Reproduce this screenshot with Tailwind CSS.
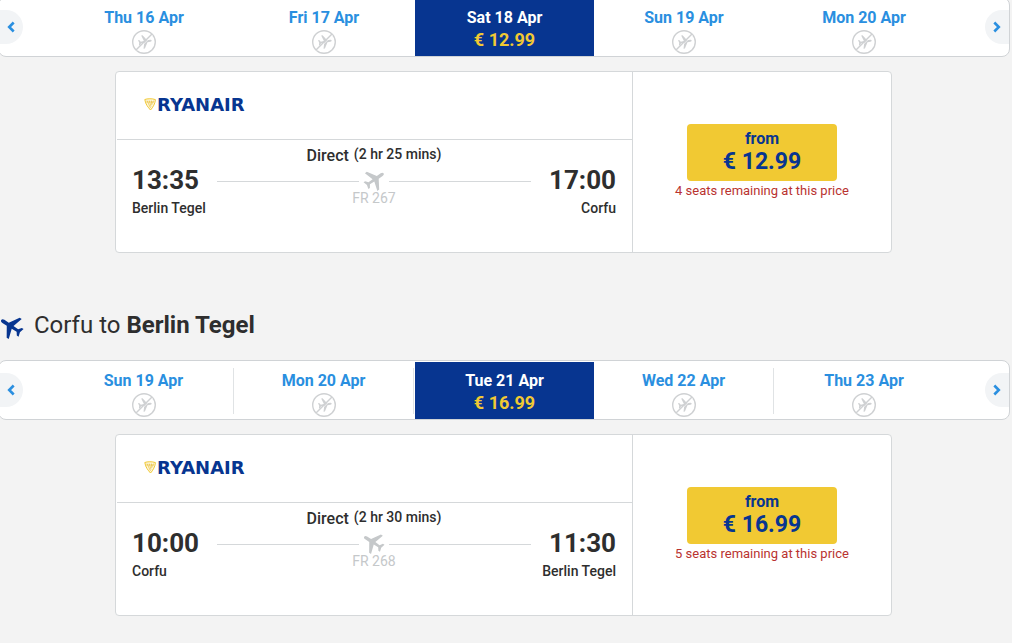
<!DOCTYPE html>
<html lang="en">
<head>
  <meta charset="UTF-8" />
  <meta name="viewport" content="width=device-width, initial-scale=1.0" />
  <title>Ryanair - Select Flights</title>
  <script src="https://cdn.jsdelivr.net/npm/@tailwindcss/browser@4"></script>
</head>
<body class="min-h-screen overflow-x-hidden bg-[#f3f3f3] font-['Roboto',sans-serif] text-[#2e2e2e]">

  <!-- Shared icons -->
  <svg class="hidden" aria-hidden="true">
    <symbol id="plane" viewBox="0 0 24 24" overflow="visible">
      <path fill="currentColor" d="M12 -2C13.300 -2 14 -.8 14 .8V6.500L25 13.500V16.200L13.800 12.800L13.500 19L17 21.500V23.800L12 22.300L7 23.800V21.500L10.500 19L10.200 12.800L-1 16.200V13.500L10 6.500V.8C10 -.8 10.700 -2 12 -2z" />
    </symbol>
    <symbol id="no-flight" viewBox="0 0 24 24">
      <circle cx="12" cy="12" r="11.300" fill="none" stroke="currentColor" stroke-width="1.400" />
      <path fill="currentColor" transform="translate(12.500 11.800) rotate(80) scale(.52) translate(-12 -12)" d="M12 -2C13.300 -2 14 -.8 14 .8V6.500L25 13.500V16.200L13.800 12.800L13.500 19L17 21.500V23.800L12 22.300L7 23.800V21.500L10.500 19L10.200 12.800L-1 16.200V13.500L10 6.500V.8C10 -.8 10.700 -2 12 -2z" />
      <path d="M5 20.600L20.600 5" stroke="#fff" stroke-width=".7" />
      <path d="M4 20L20 4" stroke="currentColor" stroke-width="1.400" />
    </symbol>
    <symbol id="chevron-left" viewBox="0 0 8 12">
      <path d="M6.700 1.500L2.200 6l4.500 4.500" fill="none" stroke="currentColor" stroke-width="2.600" />
    </symbol>
    <symbol id="chevron-right" viewBox="0 0 8 12">
      <path d="M1.300 1.500L5.800 6l-4.500 4.500" fill="none" stroke="currentColor" stroke-width="2.600" />
    </symbol>
    <symbol id="harp" viewBox="0 0 12 13">
      <path d="M.8 1.500C3 .6 8.500 .4 11.400 1.600C11.300 5 9 9.500 6.500 12C4 9 1.500 6.500 .8 1.500z" fill="#fdf6dc" stroke="#f1c933" stroke-width="1" />
      <path d="M3 2.500L6.500 10M5.200 2.500L7 8.500M7.400 2.500L7.800 7M9.500 2.600L8.500 5.500M1.800 4L9.800 4" fill="none" stroke="#e8b92a" stroke-width=".6" />
    </symbol>
  </svg>

  <main>
    <!-- Outbound flight -->
    <section>
      <div class="-mt-[3px] -ml-0.5 mr-0.5 flex h-[60px] items-center justify-between overflow-hidden rounded-lg border border-[#d0d3d6] bg-white">
        <button aria-label="Previous days" class="flex h-[34px] w-6 items-center justify-center rounded-r-full bg-[#f2f4f6] text-[#2a8fe0]">
          <svg class="h-3 w-2"><use href="#chevron-left" /></svg>
        </button>
        <ul class="grid h-full w-full max-w-[900px] grid-cols-5 pt-px text-center text-base font-bold text-[#2a8fe0]">
          <li>
            <button class="flex h-full w-full flex-col items-center pt-[9px] leading-5">Thu 16 Apr
              <svg class="mt-0.5 h-6 w-6 shrink-0 text-[#cfd1d3]"><use href="#no-flight" /></svg>
            </button>
          </li>
          <li>
            <button class="flex h-full w-full flex-col items-center pt-[9px] leading-5">Fri 17 Apr
              <svg class="mt-0.5 h-6 w-6 shrink-0 text-[#cfd1d3]"><use href="#no-flight" /></svg>
            </button>
          </li>
          <li class="pl-px">
            <button class="flex h-full w-full flex-col items-center bg-[#073590] pt-[9px] leading-5 text-white">Sat 18 Apr
              <span class="text-lg leading-6 text-[#f1c933]">€ 12.99</span>
            </button>
          </li>
          <li>
            <button class="flex h-full w-full flex-col items-center pt-[9px] leading-5">Sun 19 Apr
              <svg class="mt-0.5 h-6 w-6 shrink-0 text-[#cfd1d3]"><use href="#no-flight" /></svg>
            </button>
          </li>
          <li>
            <button class="flex h-full w-full flex-col items-center pt-[9px] leading-5">Mon 20 Apr
              <svg class="mt-0.5 h-6 w-6 shrink-0 text-[#cfd1d3]"><use href="#no-flight" /></svg>
            </button>
          </li>
        </ul>
        <button aria-label="Next days" class="flex h-[34px] w-6 items-center justify-center rounded-l-full bg-[#f2f4f6] text-[#2a8fe0]">
          <svg class="h-3 w-2"><use href="#chevron-right" /></svg>
        </button>
      </div>

      <div class="pt-3.5 pr-[5px]">
        <article class="mx-auto flex min-h-[182px] w-full max-w-[777px] rounded border border-[#d5d8da] bg-white">
          <div class="flex-1 border-r border-[#d5d8da]">
            <div class="ml-px flex h-[68px] items-center gap-px border-b border-[#d5d8da] pb-0.5 pl-[27px]">
              <svg class="h-[13px] w-3"><use href="#harp" /></svg>
              <span class="font-['DejaVu_Sans',sans-serif] text-lg leading-6 font-bold text-[#073590]">RYANAIR</span>
            </div>
            <div class="px-4 pt-1.5">
              <p class="flex items-start justify-center gap-[5px] text-base leading-5 font-medium">Direct <span class="text-sm leading-4">(2 hr 25 mins)</span></p>
              <div class="flex">
                <div class="w-[85px]">
                  <p class="text-[26px] leading-7 font-bold">13:35</p>
                  <p class="text-sm leading-7 font-medium">Berlin Tegel</p>
                </div>
                <div class="flex-1 pt-1 text-center text-sm leading-3 text-[#c5c8ca]">
                  <div class="flex items-center gap-[5px]">
                    <span class="h-px flex-1 bg-[#d5d8da]"></span>
                    <svg class="mb-0.5 h-5 w-5 rotate-55 overflow-visible"><use href="#plane" /></svg>
                    <span class="h-px flex-1 bg-[#d5d8da]"></span>
                  </div>
                  FR 267
                </div>
                <div class="w-[85px] text-right">
                  <p class="text-[26px] leading-7 font-bold">17:00</p>
                  <p class="text-sm leading-7 font-medium">Corfu</p>
                </div>
              </div>
            </div>
          </div>
          <div class="flex w-[258px] flex-col items-center justify-center">
            <button class="flex h-[57px] w-[150px] flex-col items-center rounded bg-[#f1c933] pt-[5px] text-base leading-5 font-bold text-[#073590]">from
              <span class="text-[23px] leading-[26px]">€ 12.99</span>
            </button>
            <p class="text-[13px] leading-5 text-[#b93330]">4 seats remaining at this price</p>
          </div>
        </article>
      </div>
    </section>

    <!-- Return flight -->
    <section class="pt-14">
      <h2 class="flex items-center gap-[11px] pb-[19px] text-2xl leading-8">
        <svg class="mt-1 ml-px h-[22px] w-[22px] -rotate-57 overflow-visible text-[#073590]"><use href="#plane" /></svg>
        <span>Corfu to <strong class="font-bold">Berlin Tegel</strong></span>
      </h2>

      <div class="-ml-0.5 mr-0.5 flex h-[60px] items-center justify-between overflow-hidden rounded-lg border border-[#d0d3d6] bg-white">
        <button aria-label="Previous days" class="flex h-[34px] w-6 items-center justify-center rounded-r-full bg-[#f2f4f6] text-[#2a8fe0]">
          <svg class="h-3 w-2"><use href="#chevron-left" /></svg>
        </button>
        <ul class="grid h-full w-full max-w-[900px] grid-cols-5 pt-px text-center text-base font-bold text-[#2a8fe0]">
          <li class="flex items-center">
            <button class="flex h-full flex-1 flex-col items-center pt-[9px] leading-5">Sun 19 Apr
              <svg class="mt-0.5 h-6 w-6 shrink-0 text-[#cfd1d3]"><use href="#no-flight" /></svg>
            </button>
            <span class="h-[46px] w-px bg-[#e0e3e5]"></span>
          </li>
          <li class="flex items-center">
            <button class="flex h-full flex-1 flex-col items-center pt-[9px] leading-5">Mon 20 Apr
              <svg class="mt-0.5 h-6 w-6 shrink-0 text-[#cfd1d3]"><use href="#no-flight" /></svg>
            </button>
            <span class="h-[46px] w-px bg-[#e0e3e5]"></span>
          </li>
          <li class="pl-px">
            <button class="flex h-full w-full flex-col items-center bg-[#073590] pt-[9px] leading-5 text-white">Tue 21 Apr
              <span class="text-lg leading-6 text-[#f1c933]">€ 16.99</span>
            </button>
          </li>
          <li class="flex items-center">
            <button class="flex h-full flex-1 flex-col items-center pt-[9px] leading-5">Wed 22 Apr
              <svg class="mt-0.5 h-6 w-6 shrink-0 text-[#cfd1d3]"><use href="#no-flight" /></svg>
            </button>
            <span class="h-[46px] w-px bg-[#e0e3e5]"></span>
          </li>
          <li>
            <button class="flex h-full w-full flex-col items-center pt-[9px] leading-5">Thu 23 Apr
              <svg class="mt-0.5 h-6 w-6 shrink-0 text-[#cfd1d3]"><use href="#no-flight" /></svg>
            </button>
          </li>
        </ul>
        <button aria-label="Next days" class="flex h-[34px] w-6 items-center justify-center rounded-l-full bg-[#f2f4f6] text-[#2a8fe0]">
          <svg class="h-3 w-2"><use href="#chevron-right" /></svg>
        </button>
      </div>

      <div class="pt-3.5 pr-[5px]">
        <article class="mx-auto flex min-h-[182px] w-full max-w-[777px] rounded border border-[#d5d8da] bg-white">
          <div class="flex-1 border-r border-[#d5d8da]">
            <div class="ml-px flex h-[68px] items-center gap-px border-b border-[#d5d8da] pb-0.5 pl-[27px]">
              <svg class="h-[13px] w-3"><use href="#harp" /></svg>
              <span class="font-['DejaVu_Sans',sans-serif] text-lg leading-6 font-bold text-[#073590]">RYANAIR</span>
            </div>
            <div class="px-4 pt-1.5">
              <p class="flex items-start justify-center gap-[5px] text-base leading-5 font-medium">Direct <span class="text-sm leading-4">(2 hr 30 mins)</span></p>
              <div class="flex">
                <div class="w-[85px]">
                  <p class="text-[26px] leading-7 font-bold">10:00</p>
                  <p class="text-sm leading-7 font-medium">Corfu</p>
                </div>
                <div class="flex-1 pt-1 text-center text-sm leading-3 text-[#c5c8ca]">
                  <div class="flex items-center gap-[5px]">
                    <span class="h-px flex-1 bg-[#d5d8da]"></span>
                    <svg class="mb-0.5 h-5 w-5 -rotate-57 overflow-visible"><use href="#plane" /></svg>
                    <span class="h-px flex-1 bg-[#d5d8da]"></span>
                  </div>
                  FR 268
                </div>
                <div class="w-[85px] text-right">
                  <p class="text-[26px] leading-7 font-bold">11:30</p>
                  <p class="text-sm leading-7 font-medium">Berlin Tegel</p>
                </div>
              </div>
            </div>
          </div>
          <div class="flex w-[258px] flex-col items-center justify-center">
            <button class="flex h-[57px] w-[150px] flex-col items-center rounded bg-[#f1c933] pt-[5px] text-base leading-5 font-bold text-[#073590]">from
              <span class="text-[23px] leading-[26px]">€ 16.99</span>
            </button>
            <p class="text-[13px] leading-5 text-[#b93330]">5 seats remaining at this price</p>
          </div>
        </article>
      </div>
    </section>
  </main>
</body>
</html>
